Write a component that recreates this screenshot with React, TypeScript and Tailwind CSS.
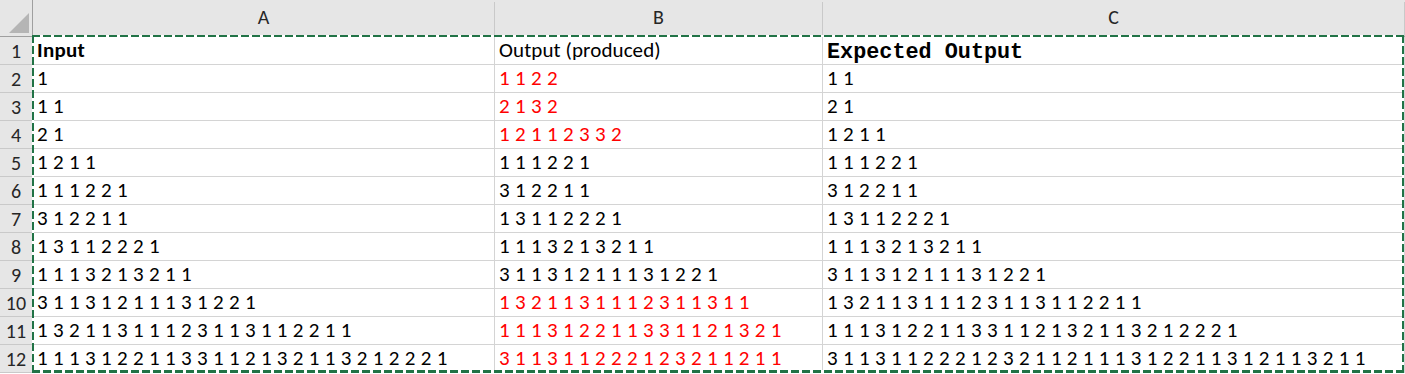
const rows: [string, string, string, boolean][] = [
  ["1", "1 1 2 2", "1 1", true],
  ["1 1", "2 1 3 2", "2 1", true],
  ["2 1", "1 2 1 1 2 3 3 2", "1 2 1 1", true],
  ["1 2 1 1", "1 1 1 2 2 1", "1 1 1 2 2 1", false],
  ["1 1 1 2 2 1", "3 1 2 2 1 1", "3 1 2 2 1 1", false],
  ["3 1 2 2 1 1", "1 3 1 1 2 2 2 1", "1 3 1 1 2 2 2 1", false],
  ["1 3 1 1 2 2 2 1", "1 1 1 3 2 1 3 2 1 1", "1 1 1 3 2 1 3 2 1 1", false],
  ["1 1 1 3 2 1 3 2 1 1", "3 1 1 3 1 2 1 1 1 3 1 2 2 1", "3 1 1 3 1 2 1 1 1 3 1 2 2 1", false],
  [
    "3 1 1 3 1 2 1 1 1 3 1 2 2 1",
    "1 3 2 1 1 3 1 1 1 2 3 1 1 3 1 1",
    "1 3 2 1 1 3 1 1 1 2 3 1 1 3 1 1 2 2 1 1",
    true,
  ],
  [
    "1 3 2 1 1 3 1 1 1 2 3 1 1 3 1 1 2 2 1 1",
    "1 1 1 3 1 2 2 1 1 3 3 1 1 2 1 3 2 1",
    "1 1 1 3 1 2 2 1 1 3 3 1 1 2 1 3 2 1 1 3 2 1 2 2 2 1",
    true,
  ],
  [
    "1 1 1 3 1 2 2 1 1 3 3 1 1 2 1 3 2 1 1 3 2 1 2 2 2 1",
    "3 1 1 3 1 1 2 2 2 1 2 3 2 1 1 2 1 1",
    "3 1 1 3 1 1 2 2 2 1 2 3 2 1 1 2 1 1 1 3 1 2 2 1 1 3 1 2 1 1 3 2 1 1",
    true,
  ],
];

const calibri = "font-['Carlito','Lato',sans-serif]";
const cell =
  "flex items-end border-b border-r border-[#d4d4d4] pl-1 pb-[3px] text-[21px] tracking-[0.3px] leading-none whitespace-nowrap";
const rowHead =
  "flex items-center justify-center border-b border-r border-b-[#c9c9c9] border-r-[#9f9f9f] bg-[#e6e6e6] text-[20px] text-[#262626]";

function ColHead({ label }: { label: string }) {
  return (
    <div className="flex flex-col bg-[#e6e6e6] border-b border-[#9f9f9f]">
      <div className="h-[10px]" />
      <div className="flex flex-1 items-center justify-center border-r border-[#c9c9c9] pb-1 text-[20px] text-[#262626]">
        {label}
      </div>
    </div>
  );
}

export default function App() {
  return (
    <div className={`relative h-[374px] w-[1405px] overflow-hidden bg-white ${calibri} text-black`}>
      <div className="grid grid-cols-[33px_462px_328px_582px] grid-rows-[37px_repeat(12,28px)]">
        <div className="relative border-b border-r border-[#9f9f9f] bg-[#e6e6e6]">
          <svg className="absolute left-[9px] top-[13px]" width="20" height="20" viewBox="0 0 20 20">
            <polygon points="20,0 20,20 0,20" fill="#b5b5b5" />
          </svg>
        </div>
        <ColHead label="A" />
        <ColHead label="B" />
        <ColHead label="C" />

        <div className={rowHead}>1</div>
        <div className={`${cell} font-bold`}>Input</div>
        <div className={`${cell} !tracking-[0.1px]`}>Output (produced)</div>
        <div className={`${cell} !pb-0 font-['Liberation_Mono',monospace] font-bold !text-[21.8px] !tracking-normal`}>
          Expected Output
        </div>

        {rows.map(([a, b, c, bad], i) => (
          <div key={i} className="contents">
            <div className={rowHead}>{i + 2}</div>
            <div className={cell}>{a}</div>
            <div className={`${cell} ${bad ? "text-[#ff0000]" : ""}`}>{b}</div>
            <div className={cell}>{c}</div>
          </div>
        ))}
      </div>

      {/* copy marquee */}
      <div className="absolute left-[32px] top-[35px] h-[2px] w-[1372px] bg-[repeating-linear-gradient(90deg,#217346_0_8px,#fff_8px_11px)]" />
      <div className="absolute left-[32px] top-[370px] h-[3px] w-[1372px] bg-[repeating-linear-gradient(90deg,#217346_0_8px,#fff_8px_11px)]" />
      <div className="absolute left-[32px] top-[35px] h-[338px] w-[2px] bg-[repeating-linear-gradient(180deg,#217346_0_8px,#fff_8px_11px)]" />
      <div className="absolute left-[1402px] top-[35px] h-[338px] w-[2px] bg-[repeating-linear-gradient(180deg,#217346_0_8px,#fff_8px_11px)]" />
    </div>
  );
}
